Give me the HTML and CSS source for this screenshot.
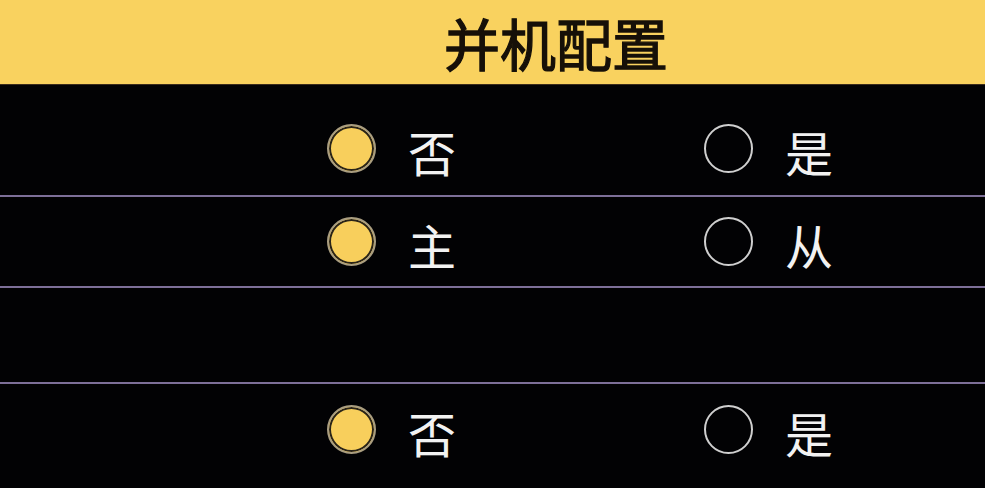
FILE: index.html
```html
<!DOCTYPE html>
<html lang="zh-CN">
<head>
    <meta charset="UTF-8">
    <meta name="viewport" content="width=device-width, initial-scale=1.0">
    <title>并机配置</title>
    <link rel="stylesheet" href="styles.css">
</head>
<body>
    <!-- Title bar -->
    <div class="title-bar">
        <h1>并机配置</h1>
    </div>

    <!-- Parallel on/off -->
    <div class="option-row first-row">
        <label class="option">
            <span class="radio checked"></span>
            <span class="option-text">否</span>
        </label>
        <label class="option">
            <span class="radio"></span>
            <span class="option-text">是</span>
        </label>
    </div>

    <!-- Master / slave -->
    <div class="option-row">
        <label class="option">
            <span class="radio checked"></span>
            <span class="option-text">主</span>
        </label>
        <label class="option">
            <span class="radio"></span>
            <span class="option-text">从</span>
        </label>
    </div>

    <div class="option-row empty-row"></div>

    <div class="option-row last-row">
        <label class="option">
            <span class="radio checked"></span>
            <span class="option-text">否</span>
        </label>
        <label class="option">
            <span class="radio"></span>
            <span class="option-text">是</span>
        </label>
    </div>
</body>
</html>
```

FILE: styles.css
```css
/* Basic styling */
* {
    box-sizing: border-box;
}
body {
    margin: 0;
    padding: 0;
    background-color: #020204;
    font-family: "Noto Sans CJK SC", "Noto Sans", sans-serif;
    color: #f2f2f2;
    overflow: hidden;
}

/* Title bar */
.title-bar {
    height: 85px;
    background-color: #f9d25f;
    border-bottom: 1px solid #3b2c1c;
    display: flex;
    justify-content: center;
    align-items: center;
    padding-left: 127px;
}
.title-bar h1 {
    margin: 0;
    font-size: 56px;
    font-weight: 400;
    line-height: 1;
    color: #161008;
    -webkit-text-stroke: 1.3px #161008;
}

/* Option rows */
.option-row {
    height: 91px;
    display: flex;
    align-items: center;
    padding-left: 327px;
    border-bottom: 2px solid #7d6f98;
}
.first-row {
    height: 112px;
    padding-top: 17px;
}
.empty-row {
    height: 96px;
}
.last-row {
    border-bottom: none;
}
.option {
    flex: 0 0 377px;
    display: flex;
    align-items: center;
    gap: 32px;
    cursor: pointer;
}
.option:last-child {
    flex: none;
}
.option-text {
    font-size: 48px;
    line-height: 1;
    padding-top: 4px;
}

/* Radio circles */
.radio {
    flex: 0 0 49px;
    height: 49px;
    border-radius: 50%;
    border: 2px solid #cfcfcf;
}
.radio.checked {
    background-color: #f8cf5c;
    border: 2px solid #a99d80;
    box-shadow: inset 0 0 0 2px #2a2418;
}
```
